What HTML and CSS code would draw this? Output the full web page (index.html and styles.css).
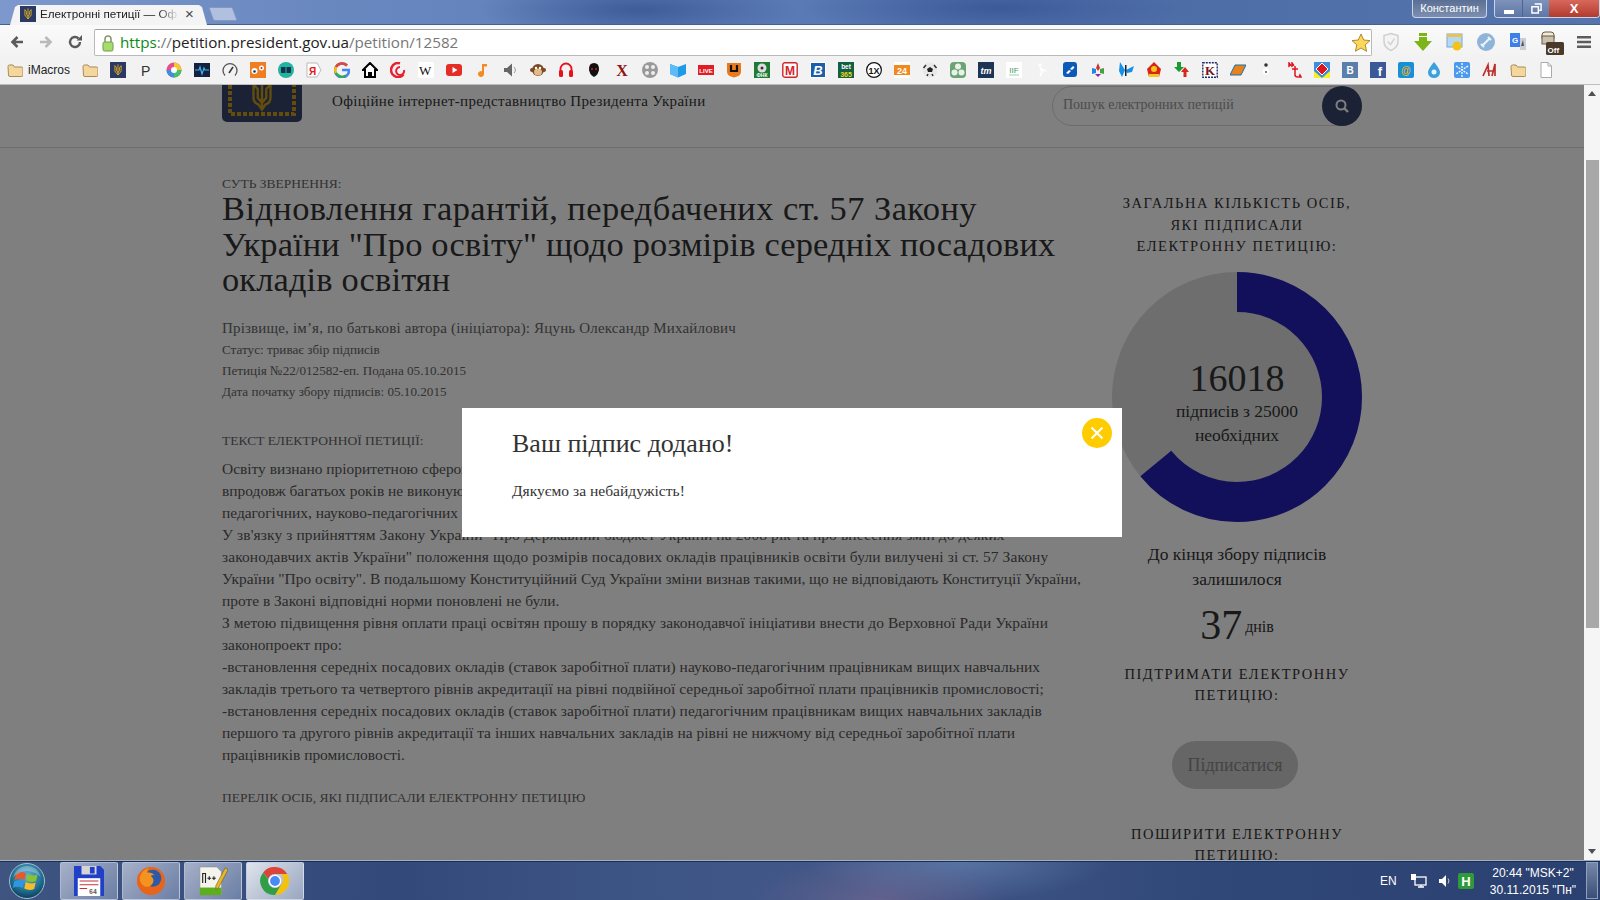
FILE: index.html
```html
<!DOCTYPE html>
<html lang="uk">
<head>
<meta charset="utf-8">
<title>Електронні петиції — Офіційне інтернет-представництво Президента України</title>
<link rel="stylesheet" href="styles.css">
</head>
<body>
<svg class="defs" width="0" height="0">
  <symbol id="folder" viewBox="0 0 16 16"><path d="M1 4.500q0-1.500 1.500-1.500h3.500l1.500 2h7q1.500 0 1.500 1.500v6.500q0 1.500-1.500 1.500h-11.500q-1.500 0-1.500-1.500z" fill="#f4d79c" stroke="#a98b55"/></symbol>
  <symbol id="trident" viewBox="0 0 16 20"><path d="M8 1v17M3 3v8q0 3 3 4l2 3 2-3q3-1 3-4V3l-2.500 3v5L8 14l-2.500-3V6z" fill="none" stroke="currentColor" stroke-width="1.400"/></symbol>
</svg>
<header class="win">
  <div class="tabstrip">
    <div class="tab">
      <svg class="fav" viewBox="0 0 16 16"><rect width="16" height="16" fill="#2c3a63"/><use href="#trident" x="3" y="1" width="10" height="14" color="#e0b020"/></svg>
      <span class="tab-title">Електронні петиції — Оф</span>
      <span class="tab-x">×</span>
    </div>
    <div class="newtab"></div>
    <div class="tab-spacer"></div>
    <div class="profile">Константин</div>
    <div class="winctl">
      <span class="wc wc-min"><i class="glyph-min"></i></span>
      <span class="wc wc-max"><svg viewBox="0 0 12 12"><path d="M4 1h7v7H9M1 4h7v7H1z" fill="none" stroke="#fff" stroke-width="1.600"/></svg></span>
      <span class="wc wc-close">X</span>
    </div>
  </div>
  <div class="toolbar">
    <div class="nav">
      <svg viewBox="0 0 16 16"><path d="M14 8H4M8.500 3L3.500 8l5 5" fill="none" stroke="#5a5a5a" stroke-width="2.600"/></svg>
      <svg viewBox="0 0 16 16"><path d="M2 8h10M7.500 3l5 5-5 5" fill="none" stroke="#b9b9b9" stroke-width="2.600"/></svg>
      <svg viewBox="0 0 16 16"><path d="M13 8a5 5 0 1 1-1.500-3.600" fill="none" stroke="#5a5a5a" stroke-width="2.400"/><path d="M9.500 6.500H15V1z" fill="#5a5a5a"/></svg>
    </div>
    <div class="omni">
      <svg class="lock" viewBox="0 0 12 18"><path d="M3 8V5a3 3 0 0 1 6 0v3" fill="none" stroke="#8a9a70" stroke-width="1.600"/><rect x="1" y="8" width="10" height="9" rx="1.500" fill="#a6dc6c" stroke="#6f9e45"/></svg>
      <span class="url"><b class="scheme">https</b><span class="dim">://</span><span class="host">petition.president.gov.ua</span><span class="dim">/petition/12582</span></span>
      <svg class="star" viewBox="0 0 20 20"><path d="M10 1l2.700 6 6.300.6-4.800 4.300 1.400 6.400L10 15l-5.600 3.300 1.400-6.400L1 7.600 7.300 7z" fill="#fbd75b" stroke="#b08a2a"/></svg>
    </div>
    <div class="ext">
      <svg viewBox="0 0 20 20"><path d="M10 1.500l7 2v6q0 6-7 9-7-3-7-9v-6z" fill="#f4f4f4" stroke="#cfcfcf" stroke-width="1.500"/><path d="M6.500 9.500l3 3 4-6" fill="none" stroke="#d5d5d5" stroke-width="1.500"/></svg>
      <svg viewBox="0 0 20 20"><path d="M6 1h8v3H6zM6 5h8v4h5l-9 10L1 9h5z" fill="#7cb518"/></svg>
      <svg viewBox="0 0 20 20"><rect x="2" y="2" width="15" height="13" fill="#b5d8f5" stroke="#7aa8d0"/><rect x="2" y="2" width="15" height="3" fill="#e8c24d"/><circle cx="12" cy="14" r="4.500" fill="#f3c316"/></svg>
      <svg viewBox="0 0 20 20"><circle cx="10" cy="10" r="9" fill="#8fb4d9"/><path d="M6 14l8-8M5 12l3 3M12 5l3 3" stroke="#eef4fa" stroke-width="2"/></svg>
      <svg viewBox="0 0 20 20"><path d="M2 1h10v14H2z" fill="#3f7fe8"/><text x="4" y="11" class="ext-g">G</text><path d="M12 6h6v12h-6z" fill="#c9ced6"/><path d="M15 8l1 6h-3z" fill="#555"/></svg>
      <svg class="ext-off" viewBox="0 0 24 24"><rect x="2" y="1" width="12" height="9" rx="3" fill="#f2ead8" stroke="#6b5a45"/><rect x="2" y="5" width="12" height="8" fill="#c9c0ae" stroke="#6b5a45"/><rect x="6" y="11" width="18" height="13" rx="1.500" fill="#4a3a2b"/><text x="7.500" y="21.500" class="ext-offt">Off</text></svg>
      <svg class="menu" viewBox="0 0 14 14"><path d="M0 1h14v2.500H0zM0 5.800h14v2.500H0zM0 10.500h14V13H0z" fill="#5d5d5d"/></svg>
    </div>
  </div>
  <nav class="bookmarks">
    <svg class="bfolder"><use href="#folder"/></svg>
    <span class="bm-label">iMacros</span>
    <svg class="bfolder2"><use href="#folder"/></svg>
    <div class="bm-row">
      <span class="bm"><svg viewBox="0 0 16 16"><rect width="16" height="16" fill="#2c3a63"/><use href="#trident" x="3" y="1" width="10" height="14" color="#e0b020"/></svg></span>
      <span class="bm"><svg viewBox="0 0 16 16"><text x="3" y="14" class="t-p">P</text></svg></span>
      <span class="bm"><svg viewBox="0 0 16 16"><circle cx="8" cy="8" r="7.500" fill="#ea4b8b"/><path d="M8 8V.500A7.500 7.500 0 0 1 15.500 8z" fill="#f6c62e"/><path d="M8 8h7.500A7.500 7.500 0 0 1 8 15.500z" fill="#46c06a"/><path d="M8 8v7.500A7.500 7.500 0 0 1 .5 8z" fill="#3d8ee0"/><circle cx="8" cy="8" r="3" fill="#fff"/></svg></span>
      <span class="bm"><svg viewBox="0 0 16 16"><rect y="1" width="16" height="14" fill="#16213f"/><path d="M1 8h4l1-3 2 7 2-6 1 2h4" fill="none" stroke="#37b5f0" stroke-width="1.200"/></svg></span>
      <span class="bm"><svg viewBox="0 0 16 16"><path d="M3 13.500a7 7 0 1 1 10 0" fill="none" stroke="#555" stroke-width="1.300"/><path d="M7 11l4-6" stroke="#333" stroke-width="1.500"/></svg></span>
      <span class="bm"><svg viewBox="0 0 16 16"><rect width="16" height="16" fill="#ef7d22"/><circle cx="4.500" cy="9" r="3" fill="#fff"/><circle cx="11.500" cy="6" r="2.500" fill="#fff"/><circle cx="4.500" cy="9.500" r="1.300" fill="#235"/><circle cx="11.500" cy="6" r="1" fill="#c22"/></svg></span>
      <span class="bm"><svg viewBox="0 0 16 16"><circle cx="8" cy="8" r="8" fill="#1fb5a2"/><rect x="3" y="5" width="10" height="6" fill="#16324a"/><path d="M8 5v6" stroke="#1fb5a2"/></svg></span>
      <span class="bm"><svg viewBox="0 0 16 16"><path d="M1 1h10l4 7-4 7H1z" fill="#fff" stroke="#bbb"/><text x="3" y="12.500" class="t-ya">Я</text></svg></span>
      <span class="bm"><svg viewBox="0 0 16 16"><path d="M13 3.500A7 7 0 1 0 15 8H8" fill="none" stroke="#4285f4" stroke-width="2.500"/><path d="M13 3.500A7 7 0 0 0 2 5" fill="none" stroke="#ea4335" stroke-width="2.500"/><path d="M2 5a7 7 0 0 0 0 6" fill="none" stroke="#fbbc05" stroke-width="2.500"/><path d="M2 11a7 7 0 0 0 10 2.500" fill="none" stroke="#34a853" stroke-width="2.500"/></svg></span>
      <span class="bm"><svg viewBox="0 0 16 16"><path d="M8 1L1 8h2v7h4v-4h2v4h4V8h2z" fill="#fff" stroke="#000" stroke-width="2"/></svg></span>
      <span class="bm"><svg viewBox="0 0 16 16"><path d="M13.500 12.500A7 7 0 1 1 10 1.300" fill="none" stroke="#e8202f" stroke-width="2.600"/><path d="M14 8a4 4 0 1 1-4-3" fill="none" stroke="#e8202f" stroke-width="2"/></svg></span>
      <span class="bm"><svg viewBox="0 0 16 16"><rect width="16" height="16" rx="2" fill="#fff"/><text x="1" y="13" class="t-w">W</text></svg></span>
      <span class="bm"><svg viewBox="0 0 16 16"><rect y="2" width="16" height="12" rx="3" fill="#e52d27"/><path d="M6.500 5v6l5-3z" fill="#fff"/></svg></span>
      <span class="bm"><svg viewBox="0 0 16 16"><path d="M8 2h5v2.500h-3V12a3 3 0 1 1-2-2.800z" fill="#f58a1f"/></svg></span>
      <span class="bm"><svg viewBox="0 0 16 16"><path d="M2 6h3l5-4.500v13L5 10H2z" fill="#666"/><path d="M12 5a4 4 0 0 1 0 6" fill="none" stroke="#999"/></svg></span>
      <span class="bm"><svg viewBox="0 0 16 16"><circle cx="8" cy="8" r="6" fill="#7b4a24"/><circle cx="2" cy="8" r="2" fill="#7b4a24"/><circle cx="14" cy="8" r="2" fill="#7b4a24"/><ellipse cx="8" cy="10" rx="4" ry="3.500" fill="#e6b98a"/><circle cx="6" cy="6" r="1.200" fill="#fff"/><circle cx="10" cy="6" r="1.200" fill="#fff"/></svg></span>
      <span class="bm"><svg viewBox="0 0 16 16"><path d="M2.500 10V7a5.500 5.500 0 0 1 11 0v3" fill="none" stroke="#e8101a" stroke-width="1.800"/><rect x="1" y="8" width="4" height="7" rx="1.500" fill="#e8101a"/><rect x="11" y="8" width="4" height="7" rx="1.500" fill="#e8101a"/></svg></span>
      <span class="bm"><svg viewBox="0 0 16 16"><path d="M8 1q5 0 5 6 0 5-5 8-5-3-5-8 0-6 5-6z" fill="#111"/><circle cx="6" cy="7" r="1" fill="#c22"/><circle cx="10" cy="7" r="1" fill="#c22"/></svg></span>
      <span class="bm"><svg viewBox="0 0 16 16"><text x="8" y="13.500" class="t-x">X</text></svg></span>
      <span class="bm"><svg viewBox="0 0 16 16"><circle cx="8" cy="8" r="8" fill="#999"/><circle cx="5" cy="5" r="2" fill="#eee"/><circle cx="11" cy="5" r="2" fill="#eee"/><circle cx="5" cy="11" r="2" fill="#eee"/><circle cx="11" cy="11" r="2" fill="#eee"/></svg></span>
      <span class="bm"><svg viewBox="0 0 16 16"><path d="M0 2l8 3 8-3v10l-8 3.500L0 12z" fill="#1f9ae8"/><path d="M8 5v10.500L0 12V2z" fill="#5bbcf5"/></svg></span>
      <span class="bm"><svg viewBox="0 0 16 16"><rect y="3" width="16" height="10" fill="#e31b23"/><text x="8" y="11" class="t-live">LIVE</text></svg></span>
      <span class="bm"><svg viewBox="0 0 16 16"><path d="M1 1h14v9q0 4-7 5.500Q1 14 1 10z" fill="#e87a1d"/><path d="M5 3v6h6V3" fill="none" stroke="#111" stroke-width="2.200"/></svg></span>
      <span class="bm"><svg viewBox="0 0 16 16"><rect width="16" height="16" fill="#1f7a33"/><circle cx="8" cy="6" r="4.500" fill="#ddd"/><circle cx="8" cy="6" r="1.500" fill="#333"/><text x="8" y="15" class="t-fnk">ФНК</text></svg></span>
      <span class="bm"><svg viewBox="0 0 16 16"><rect x=".8" y=".8" width="14.400" height="14.400" rx="2" fill="#fff" stroke="#d2232a" stroke-width="1.400"/><text x="8" y="12.500" class="t-m">M</text></svg></span>
      <span class="bm"><svg viewBox="0 0 16 16"><rect width="16" height="16" fill="#fff"/><rect x="1" y="1" width="14" height="14" fill="#1a5fa8"/><text x="8" y="13" class="t-b">B</text></svg></span>
      <span class="bm"><svg viewBox="0 0 16 16"><rect width="16" height="16" fill="#11603f"/><text x="8" y="7" class="t-bet">bet</text><text x="8" y="14.500" class="t-365">365</text></svg></span>
      <span class="bm"><svg viewBox="0 0 16 16"><circle cx="8" cy="8" r="7.400" fill="#fff" stroke="#111" stroke-width="1.200"/><text x="8" y="11.500" class="t-1x">1X</text></svg></span>
      <span class="bm"><svg viewBox="0 0 16 16"><rect width="16" height="16" fill="#fff"/><rect y="3" width="16" height="10" fill="#f08a1d"/><text x="8" y="11.500" class="t-24">24</text></svg></span>
      <span class="bm"><svg viewBox="0 0 16 16"><circle cx="8" cy="8" r="7.500" fill="#e8e8e8"/><path d="M8 5l3 2-1 3H6L5 7z" fill="#222"/><path d="M1.500 6L4 3M14.500 6L12 3M5 14l1-2M11 14l-1-2" stroke="#333" stroke-width="1.500"/></svg></span>
      <span class="bm"><svg viewBox="0 0 16 16"><rect width="16" height="16" rx="4" fill="#6ba474"/><circle cx="8" cy="4.500" r="3" fill="#e9f2e8"/><circle cx="4.500" cy="10.500" r="3" fill="#e9f2e8"/><circle cx="11.500" cy="10.500" r="3" fill="#e9f2e8"/></svg></span>
      <span class="bm"><svg viewBox="0 0 16 16"><rect width="16" height="16" fill="#1c3557"/><text x="8" y="11.500" class="t-tm">tm</text></svg></span>
      <span class="bm"><svg viewBox="0 0 16 16"><rect width="16" height="16" fill="#fff"/><text x="8" y="10.500" class="t-iif">IIF</text><path d="M3 13h10" stroke="#9bcfa6"/></svg></span>
      <span class="bm"><svg viewBox="0 0 16 16"><circle cx="6" cy="3" r="1.700" fill="#fff"/><path d="M6 5l2 5-2 4M7 7l5 2M14 14h.5" fill="none" stroke="#fff" stroke-width="1.700"/></svg></span>
      <span class="bm"><svg viewBox="0 0 16 16"><rect x="1" width="14" height="15" rx="3" fill="#0c59b8"/><path d="M4 11l3-3 2 1-3 3zM8 7l3-3 1.500 1.500L10 8z" fill="#fff"/></svg></span>
      <span class="bm"><svg viewBox="0 0 16 16"><path d="M8 1l2 5-2 3-2-3z" fill="#d32f2f"/><path d="M2 6l4 1v4l-4 1z" fill="#1e88e5"/><path d="M14 6l-4 1v4l4 1z" fill="#43a047"/><path d="M5 12h6l-3 3z" fill="#8e24aa"/></svg></span>
      <span class="bm"><svg viewBox="0 0 16 16"><path d="M7 8L2 0l-1 9 3 6zM8 8l8-4-2 6-5 1z" fill="#1590e8"/><path d="M7 3h1.500v11H7z" fill="#123"/></svg></span>
      <span class="bm"><svg viewBox="0 0 16 16"><path d="M8 0l7 7-2 8H3L1 7z" fill="#d92518"/><rect x="3" y="12" width="10" height="3" fill="#f6c619"/><circle cx="8" cy="7" r="3" fill="#f6c619"/></svg></span>
      <span class="bm"><svg viewBox="0 0 16 16"><path d="M3 0h4v5h3L5 10 0 5h3z" fill="#1c9a30"/><path d="M11 5l4 5h-2.500v5h-3v-5H7z" fill="#d8261c"/></svg></span>
      <span class="bm"><svg viewBox="0 0 16 16"><rect x=".8" y=".8" width="14.400" height="14.400" fill="#fff" stroke="#1c2d6a" stroke-width="1.400" stroke-dasharray="2 1"/><text x="8" y="13" class="t-k">K</text></svg></span>
      <span class="bm"><svg viewBox="0 0 16 16"><path d="M5 3h11l-5 10H0z" fill="#e8831c" stroke="#1273b4"/></svg></span>
      <span class="bm"><svg viewBox="0 0 16 16"><circle cx="8" cy="3" r="1.800" fill="#333"/><rect x="5" y="6" width="6" height="7" rx="3" fill="#fff"/><circle cx="8" cy="10" r="1" fill="#555"/></svg></span>
      <span class="bm"><svg viewBox="0 0 16 16"><path d="M3 1l1.500 2L3 4zM6 1l1.500 2L6 4zM9 4v9q0 2 3 2M6 7h6M14 13l1 2h-2z" fill="none" stroke="#e0141e" stroke-width="1.500"/></svg></span>
      <span class="bm"><svg viewBox="0 0 16 16"><rect width="16" height="16" fill="#f8ee22"/><path d="M0 0h16v9L8 16 0 9z" fill="#3a8ee0"/><path d="M8 1l6 6-6 6-6-6z" fill="#e0141e" stroke="#fff"/></svg></span>
      <span class="bm"><svg viewBox="0 0 16 16"><rect width="16" height="16" fill="#5b7faa"/><text x="8" y="12" class="t-vk">B</text></svg></span>
      <span class="bm"><svg viewBox="0 0 16 16"><rect width="16" height="16" fill="#3b5998"/><text x="10" y="14" class="t-f">f</text></svg></span>
      <span class="bm"><svg viewBox="0 0 16 16"><rect width="16" height="16" rx="2" fill="#1790d8"/><text x="8" y="12" class="t-at">@</text></svg></span>
      <span class="bm"><svg viewBox="0 0 16 16"><path d="M8 0q6 7 6 10.500a6 5.500 0 0 1-12 0Q2 7 8 0z" fill="#3aa0de"/><circle cx="8" cy="10" r="2.500" fill="#e8f5fc"/></svg></span>
      <span class="bm"><svg viewBox="0 0 16 16"><rect width="16" height="16" rx="2" fill="#4a9bef"/><path d="M8 1v14M2 4l12 8M14 4L2 12" stroke="#fff" stroke-width="1.300" stroke-dasharray="2 1"/></svg></span>
      <span class="bm"><svg viewBox="0 0 16 16"><rect width="16" height="16" fill="#f4f0ee"/><path d="M1 14L6 3l1 11M5 9h6M10 14l3-12v12" fill="none" stroke="#b92e30" stroke-width="1.700"/></svg></span>
      <span class="bm"><svg viewBox="0 0 16 16"><use href="#folder"/></svg></span>
      <span class="bm"><svg viewBox="0 0 16 16"><path d="M3 .5h7l3.500 3.500v11.500H3z" fill="#fff" stroke="#aaa"/><path d="M10 .5V4h3.500" fill="none" stroke="#aaa"/></svg></span>
    </div>
  </nav>
</header>

<div class="viewport">
  <div class="page">
    <div class="site-head">
      <div class="container head-row">
        <div class="logo">
          <svg viewBox="0 0 80 37"><rect y="-8" width="80" height="45" rx="5" fill="#36446a"/><path d="M8 0v29h64V0" fill="none" stroke="#c89a18" stroke-width="4" stroke-dasharray="4 2"/><use href="#trident" x="25" y="-6" width="30" height="34" color="#c89a18"/></svg>
        </div>
        <p class="tagline">Офіційне інтернет-представництво Президента України</p>
        <form class="search">
          <span class="search-text">Пошук електронних петицій</span>
          <span class="search-btn"><svg viewBox="0 0 16 16"><circle cx="7" cy="7" r="4.500" fill="none" stroke="#fff" stroke-width="2"/><path d="M10.500 10.500L14 14" stroke="#fff" stroke-width="2.400"/></svg></span>
        </form>
      </div>
    </div>

    <div class="container content">
      <main class="article">
        <div class="cap cap-top">СУТЬ ЗВЕРНЕННЯ:</div>
        <h1 class="title">
          <span class="title-first">Відновлення гарантій, передбачених ст. 57 Закону</span>
          <span>України "Про освіту" щодо розмірів середніх посадових</span>
          <span>окладів освітян</span>
        </h1>
        <ul class="meta">
          <li class="meta-author">Прізвище, ім’я, по батькові автора (ініціатора): Яцунь Олександр Михайлович</li>
          <li>Статус: триває збір підписів</li>
          <li>Петиція №22/012582-еп. Подана 05.10.2015</li>
          <li>Дата початку збору підписів: 05.10.2015</li>
        </ul>
        <div class="cap cap-text">ТЕКСТ ЕЛЕКТРОННОЇ ПЕТИЦІЇ:</div>
        <div class="body">
          <span>Освіту визнано пріоритетною сферою розвитку держави, однак положення законодавства</span>
          <span>впродовж багатьох років не виконуються в частині оплати праці працівників освіти,</span>
          <span>педагогічних, науково-педагогічних працівників вищих навчальних закладів.</span>
          <span class="ls-a">У зв'язку з прийняттям Закону України "Про Державний бюджет України на 2008 рік та про внесення змін до деяких</span>
          <span class="ls-a">законодавчих актів України" положення щодо розмірів посадових окладів працівників освіти були вилучені зі ст. 57 Закону</span>
          <span>України "Про освіту". В подальшому Конституційний Суд України зміни визнав такими, що не відповідають Конституції України,</span>
          <span>проте в Законі відповідні норми поновлені не були.</span>
          <span class="ls-b">З метою підвищення рівня оплати праці освітян прошу в порядку законодавчої ініціативи внести до Верховної Ради України</span>
          <span>законопроект про:</span>
          <span class="ls-b">-встановлення середніх посадових окладів (ставок заробітної плати) науково-педагогічним працівникам вищих навчальних</span>
          <span class="ls-c">закладів третього та четвертого рівнів акредитації на рівні подвійної середньої заробітної плати працівників промисловості;</span>
          <span class="ls-b">-встановлення середніх посадових окладів (ставок заробітної плати) педагогічним працівникам вищих навчальних закладів</span>
          <span class="ls-c">першого та другого рівнів акредитації та інших навчальних закладів на рівні не нижчому від середньої заробітної плати</span>
          <span>працівників промисловості.</span>
        </div>
        <div class="cap cap-list">ПЕРЕЛІК ОСІБ, ЯКІ ПІДПИСАЛИ ЕЛЕКТРОННУ ПЕТИЦІЮ</div>
      </main>

      <aside class="side">
        <h3 class="side-h">ЗАГАЛЬНА КІЛЬКІСТЬ ОСІБ,<br>ЯКІ ПІДПИСАЛИ<br>ЕЛЕКТРОННУ ПЕТИЦІЮ:</h3>
        <div class="donut">
          <svg viewBox="0 0 250 250"><circle cx="125" cy="125" r="125" fill="#dcdcdc"/><circle cx="125" cy="125" r="105" fill="none" stroke="#2420b4" stroke-width="40" pathLength="100" stroke-dasharray="64.070 100" transform="rotate(-90 125 125)"/></svg>
          <div class="donut-label">
            <div class="count">16018</div>
            <div class="of">підписів з 25000<br>необхідних</div>
          </div>
        </div>
        <p class="left">До кінця збору підписів<br>залишилося</p>
        <div class="days"><span class="days-n">37</span> <span class="days-t">днів</span></div>
        <h3 class="side-h side-support">ПІДТРИМАТИ ЕЛЕКТРОННУ<br>ПЕТИЦІЮ:</h3>
        <div class="sign">Підписатися</div>
        <h3 class="side-h side-share">ПОШИРИТИ ЕЛЕКТРОННУ<br>ПЕТИЦІЮ:</h3>
      </aside>
    </div>

    <div class="overlay"></div>
    <div class="modal">
      <h2 class="modal-h">Ваш підпис додано!</h2>
      <p class="modal-p">Дякуємо за небайдужість!</p>
      <span class="modal-x"><svg viewBox="0 0 30 30"><path d="M9.500 9.500l11 11M20.500 9.500l-11 11" stroke="#fff" stroke-width="2"/></svg></span>
    </div>
  </div>
  <div class="scrollbar">
    <span class="sb-up"></span>
    <span class="sb-thumb"></span>
    <span class="sb-down"></span>
  </div>
</div>

<footer class="taskbar">
  <div class="orb">
    <svg viewBox="0 0 36 36">
      <defs><radialGradient id="orbg" cx="50%" cy="35%" r="65%"><stop offset="0" stop-color="#5fb4d8"/><stop offset=".7" stop-color="#1d6a8c"/><stop offset="1" stop-color="#0e3c58"/></radialGradient></defs>
      <circle cx="18" cy="18" r="17.500" fill="url(#orbg)" stroke="#9cc2d4"/>
      <path d="M7 11q5-3 10-.500l-1.500 6.500q-5-2.500-10 0z" fill="#e8582a"/>
      <path d="M18.500 11q5 2.500 10 .500l-1.500 6.500q-5 2-10-.500z" fill="#86c232"/>
      <path d="M5.200 18.500q5-2.500 10 0l-1.500 6.500q-5-2.500-10 0z" fill="#2f96e2"/>
      <path d="M16.700 19q5 2.500 10 .500l-1.500 6.500q-5 2-10-.500z" fill="#f6bc2c"/>
      <path d="M4 14q14-12 28 0-4-11-14-11T4 14z" fill="#fff" opacity=".28"/>
    </svg>
  </div>
  <div class="task">
    <svg viewBox="0 0 32 32"><path d="M0 0h28l4 4v28H0z" fill="#2040c8"/><rect x="8" y="0" width="16" height="9" fill="#d5d5d5"/><rect x="17" y="1" width="5" height="7" fill="#2040c8"/><rect x="4" y="13" width="24" height="19" fill="#fff"/><path d="M6 16h20M6 20h20M6 24h8" stroke="#c8303c" stroke-width="1.300"/><text x="16" y="30" class="t-64">64</text></svg>
  </div>
  <div class="task">
    <svg viewBox="0 0 32 32"><circle cx="16" cy="16" r="15" fill="#e8641a"/><circle cx="18" cy="13" r="9" fill="#2a5aa8"/><path d="M4 12q2-8 10-10-3 3-2 5 5-1 8 3-3-1-4 1 4 3 2 7-3 5-8 4Q4 20 4 12z" fill="#f39420"/></svg>
  </div>
  <div class="task">
    <svg viewBox="0 0 32 32"><path d="M2 1h18l5 5v25H2z" fill="#f4f4ec" stroke="#888" stroke-width=".6"/><rect x="2" y="23" width="23" height="8" fill="#5cae1c"/><path d="M5 18V8h3v10M10 13h4M12 11v4M15 13h4M17 11v4" fill="none" stroke="#222" stroke-width="1.200"/><path d="M29 2l3 2-10 19-3 2 0-4z" fill="#e8b92a" stroke="#6a5218" stroke-width=".6"/></svg>
  </div>
  <div class="task task-on">
    <svg viewBox="0 0 32 32"><path d="M16 1a15 15 0 0 1 13 7.500H16a7.500 7.500 0 0 0-7.200 5.400L3.400 6.800A15 15 0 0 1 16 1z" fill="#db4437"/><path d="M29 8.500A15 15 0 0 1 16 31l6.500-11.200a7.500 7.500 0 0 0 0-11.300z" fill="#f4c20d"/><path d="M3.400 6.800A15 15 0 0 0 16 31l6.500-11.200A7.500 7.500 0 0 1 8.800 14z" fill="#2f9e44"/><circle cx="16" cy="16" r="6" fill="#4a8af4" stroke="#fff" stroke-width="1.500"/></svg>
  </div>
  <div class="task-fill"></div>
  <div class="tray">
    <span class="lang">EN</span>
    <svg class="tray-net" viewBox="0 0 16 16"><rect x="4" y="4" width="11" height="8" fill="none" stroke="#fff" stroke-width="1.300"/><path d="M7 14h6M10 12v2" stroke="#fff" stroke-width="1.300"/><rect x="0" y="1" width="5" height="6" fill="#fff"/></svg>
    <svg class="tray-vol" viewBox="0 0 16 16"><path d="M2 6h3l4-4v12l-4-4H2z" fill="#fff"/><path d="M11 5.500q2 2.500 0 5" fill="none" stroke="#ccc"/></svg>
    <svg class="tray-h" viewBox="0 0 16 16"><rect width="16" height="16" rx="2" fill="#2f9a3a"/><text x="8" y="13" class="t-h">H</text></svg>
    <div class="clock"><span>20:44 "MSK+2"</span><span>30.11.2015 "Пн"</span></div>
    <span class="show-desk"></span>
  </div>
</footer>
</body>
</html>
```
FILE: styles.css
```css
* { box-sizing: border-box; }
html, body { margin: 0; height: 100%; }
body {
  display: flex;
  flex-direction: column;
  height: 900px;
  width: 1600px;
  overflow: hidden;
  font-family: "Liberation Serif", serif;
  color: #333;
  background: #fff;
}
.defs { position: absolute; }
svg { display: block; }

/* window chrome */
.win { height: 85px; flex: none; display: flex; flex-direction: column; font-family: "Liberation Sans", sans-serif; }
.tabstrip {
  height: 25px;
  display: flex;
  align-items: flex-end;
  padding-left: 10px;
  background:
    radial-gradient(ellipse 160px 30px at 640px 10px, #3e5c98 0, rgba(62,92,152,0) 100%),
    radial-gradient(ellipse 200px 30px at 1000px 8px, #3c5a98 0, rgba(60,90,152,0) 100%),
    linear-gradient(90deg, #7d98cc 0, #6a88c0 20%, #5a7ab6 50%, #4e6ea8 75%, #5574ad 100%);
  border-bottom: 1px solid #44608f;
}
.tab {
  width: 197px;
  height: 20px;
  display: flex;
  align-items: center;
  padding: 0 0 3px 10px;
  background: #f4f4f4;
  clip-path: polygon(0 100%, 5px 2px, 8px 0, 189px 0, 192px 2px, 197px 100%);
  font-size: 12px;
  color: #222;
  margin-bottom: -1px;
}
.fav { width: 16px; height: 16px; flex: none; margin-right: 4px; }
.tab-title { width: 139px; white-space: nowrap; overflow: hidden; -webkit-mask-image: linear-gradient(90deg, #000 85%, transparent); mask-image: linear-gradient(90deg, #000 85%, transparent); font-size: 11.700px; }
.tab-x { margin-left: 6px; font-size: 15px; color: #444; line-height: 1; }
.newtab { width: 30px; height: 14px; margin: 0 0 3px 1px; background: #b0c0de; border: 1px solid #8298c0; border-radius: 2px; transform: skewX(20deg) scaleX(.8); }
.tab-spacer { flex: 1; }
.profile {
  align-self: flex-start;
  width: 75px;
  height: 18px;
  margin-right: 7px;
  border: 1px solid #c8d4e8;
  border-top: 0;
  border-radius: 0 0 4px 4px;
  background: linear-gradient(#5a6f94, #7d8fb0);
  color: #fff;
  font-size: 11px;
  line-height: 17px;
  text-align: center;
}
.winctl { align-self: flex-start; display: flex; width: 106px; height: 18px; border: 1px solid #c8d4e8; border-top: 0; border-radius: 0 0 4px 4px; overflow: hidden; }
.wc { height: 17px; display: flex; align-items: center; justify-content: center; color: #fff; }
.wc svg { width: 11px; height: 11px; }
.wc-min { width: 27px; background: linear-gradient(#7d93bb, #5d76a5); }
.wc-max { width: 27px; background: linear-gradient(#7d93bb, #5d76a5); border-left: 1px solid #4d6490; }
.wc-close { flex: 1; background: linear-gradient(#d8685c, #b23a2e); font-size: 13px; font-weight: bold; }
.glyph-min { width: 10px; height: 4px; background: #fff; margin-top: 6px; }

.toolbar { height: 33px; display: flex; align-items: center; background: linear-gradient(#fafafa, #f2f2f2); }
.nav { width: 94px; display: flex; padding-left: 9px; gap: 13px; flex: none; }
.nav svg { width: 16px; height: 16px; }
.omni {
  width: 1278px;
  height: 27px;
  flex: none;
  margin-top: 2px;
  display: flex;
  align-items: center;
  background: #fff;
  border: 1px solid #b9b9b9;
  border-top-color: #a0a0a0;
  border-radius: 2px;
  padding: 0 0 0 7px;
}
.lock { width: 12px; height: 18px; flex: none; margin-right: 6px; }
.url { flex: 1; font-size: 15.200px; line-height: 23px; padding-bottom: 1px; white-space: nowrap; font-family: "Open Sans", "Liberation Sans", sans-serif; }
.scheme { font-weight: normal; color: #0b8a12; }
.dim { color: #777; }
.host { color: #222; }
.star { width: 20px; height: 20px; flex: none; }
.ext { flex: 1; display: flex; align-items: center; padding-left: 9px; gap: 11.800px; }
.ext svg { width: 20px; height: 20px; flex: none; }
.ext svg.ext-off { width: 24px; height: 24px; margin-top: 3px; }
.ext svg.menu { width: 14px; height: 14px; margin-left: 1px; }
.ext-g { font: bold 8px "Liberation Sans", sans-serif; fill: #fff; }
.ext-offt { font: bold 8px "Liberation Sans", sans-serif; fill: #fff; }

.bookmarks { height: 27px; display: flex; align-items: center; padding-bottom: 2px; background: #f2f2f2; border-bottom: 1px solid #bdbdbd; position: relative; }
.bfolder { width: 16px; height: 16px; margin-left: 7px; flex: none; }
.bm-label { font-size: 12px; margin-left: 5px; width: 42px; color: #222; flex: none; white-space: nowrap; }
.bfolder2 { width: 16px; height: 16px; margin-left: 12px; flex: none; }
.bm-row { display: flex; margin-left: 6px; }
.bm { width: 28px; display: flex; justify-content: center; flex: none; }
.bm svg { width: 16px; height: 16px; }
.bm text { font-family: "Liberation Sans", sans-serif; text-anchor: middle; }
.bm .t-p { font-size: 14px; fill: #333; text-anchor: start; }
.bm .t-ya { font-size: 10px; fill: #e01818; font-weight: bold; text-anchor: start; }
.bm .t-w { font: 13px "Liberation Serif", serif; fill: #111; text-anchor: start; }
.bm .t-x { font: bold 16px "Liberation Serif", serif; fill: #8f1414; }
.bm .t-live { font-size: 6px; font-weight: bold; fill: #fff; }
.bm .t-fnk { font-size: 5px; font-weight: bold; fill: #fff; }
.bm .t-m { font-size: 12px; font-weight: bold; fill: #d2232a; }
.bm .t-b { font-size: 13px; font-weight: bold; font-style: italic; fill: #fff; }
.bm .t-bet { font-size: 6.500px; font-weight: bold; fill: #fff; }
.bm .t-365 { font-size: 7px; font-weight: bold; fill: #f6d21e; }
.bm .t-1x { font-size: 9px; font-weight: bold; fill: #111; }
.bm .t-24 { font-size: 9px; font-weight: bold; fill: #fff; }
.bm .t-tm { font-size: 9px; font-weight: bold; font-style: italic; fill: #fff; }
.bm .t-iif { font-size: 8px; fill: #3a9a58; }
.bm .t-k { font: bold 13px "Liberation Serif", serif; fill: #7a1420; }
.bm .t-vk { font-size: 10px; font-weight: bold; fill: #fff; }
.bm .t-f { font-size: 13px; font-weight: bold; fill: #fff; }
.bm .t-at { font-size: 10px; font-weight: bold; fill: #f2b21c; }

/* page */
.viewport { flex: 1; min-height: 0; display: flex; }
.page { position: relative; width: 1584px; height: 775px; overflow: hidden; background: #fff; }
.container { width: 1140px; margin: 0 auto; }
.site-head { height: 63px; border-bottom: 1px solid #ddd; }
.head-row { display: flex; height: 100%; }
.logo { width: 80px; height: 37px; flex: none; }
.logo svg { width: 80px; height: 37px; }
.tagline { margin: 6px 0 0 30px; font-size: 15px; line-height: 20px; flex: 1; color: #333; letter-spacing: .31px; white-space: nowrap; }
.search { width: 310px; height: 40px; margin-top: 1px; position: relative; display: flex; align-items: center; padding-bottom: 3px; border: 1px solid #d8d8d8; border-radius: 20px; }
.search-text { margin-left: 10px; font-size: 14px; color: #999; white-space: nowrap; }
.search-btn { position: absolute; right: -1px; top: -1px; width: 40px; height: 40px; border-radius: 50%; background: #36446a; display: flex; align-items: center; justify-content: center; }
.search-btn svg { width: 16px; height: 16px; }

.content { display: flex; padding-top: 29px; }
.article { width: 890px; flex: none; }
.cap { font-size: 13.500px; line-height: 16px; color: #666; white-space: nowrap; }
.cap-top { margin-top: -1px; }
.title { margin: -1px 0 0; font-size: 34.400px; font-weight: normal; line-height: 35.500px; color: #333; letter-spacing: .15px; }
.title-first { letter-spacing: .45px; }
.title span, .body span { display: block; white-space: nowrap; }
.meta { list-style: none; margin: 20px 0 0; padding: 0; font-size: 13.150px; line-height: 21px; color: #666; white-space: nowrap; }
.meta-author { font-size: 15px; letter-spacing: .17px; }
.cap-text { margin-top: 31px; }
.body { margin-top: 9px; font-size: 15.450px; line-height: 22px; color: #555; }
.body .ls-a { letter-spacing: .12px; }
.body .ls-b { letter-spacing: .05px; }
.body .ls-c { letter-spacing: .025px; }
.cap-list { margin-top: 24px; }

.side { width: 250px; margin-left: 0; flex: none; text-align: center; margin-top: 16px; }
.side-h { margin: 0; font-size: 14.500px; font-weight: normal; line-height: 21.500px; letter-spacing: 1.500px; color: #333; white-space: nowrap; }
.donut { position: relative; width: 250px; height: 250px; margin-top: 14px; }
.donut svg { width: 250px; height: 250px; }
.donut-label { position: absolute; left: 0; top: 85px; width: 100%; }
.count { font-size: 38px; line-height: 42px; color: #333; }
.of { font-size: 17.500px; line-height: 24.500px; color: #333; }
.left { margin: 20px 0 0; font-size: 17.500px; line-height: 25px; color: #333; }
.days { margin-top: 10px; height: 46px; display: flex; justify-content: center; align-items: center; gap: 3px; color: #333; }
.days-n { font-size: 42px; line-height: 46px; }
.days-t { font-size: 16px; padding-top: 5px; }
.side-support { margin-top: 16px; }
.sign { width: 126px; height: 48px; margin: 34px auto 0; transform: translateX(-2px); background: #ccc; border-radius: 24px; color: #888; font-size: 17.800px; line-height: 48px; }
.side-share { margin-top: 35px; }

.overlay { position: absolute; inset: 0; background: rgba(0,0,0,.5); }
.modal { position: absolute; left: 462px; top: 323px; width: 660px; height: 129px; background: #fff; padding: 20px 50px; }
.modal-h { margin: 0; font-size: 26px; font-weight: normal; line-height: 32px; color: #333; white-space: nowrap; }
.modal-p { margin: 21px 0 0; font-size: 15.550px; line-height: 20px; color: #333; }
.modal-x { position: absolute; right: 10px; top: 10px; width: 30px; height: 30px; border-radius: 50%; background: #fc0; }
.modal-x svg { width: 30px; height: 30px; }

.scrollbar { width: 16px; flex: none; background: #f5f5f5; display: flex; flex-direction: column; align-items: center; }
.sb-up { width: 0; height: 0; margin-top: 6px; border: 4px solid transparent; border-top: 0; border-bottom: 5px solid #505050; flex: none; }
.sb-thumb { width: 13px; height: 468px; margin-top: 64px; background: #a8a8a8; flex: none; }
.sb-down { width: 0; height: 0; margin-top: auto; margin-bottom: 6px; border: 4px solid transparent; border-bottom: 0; border-top: 5px solid #505050; flex: none; }

/* taskbar */
.taskbar {
  height: 40px;
  flex: none;
  display: flex;
  align-items: center;
  font-family: "Liberation Sans", sans-serif;
  border-top: 1px solid #9fb0c8;
  box-shadow: inset 0 1px 0 #1c2f52;
  background:
    radial-gradient(ellipse 130px 45px at 880px 40px, rgba(150,115,150,.38) 0, rgba(150,115,150,0) 100%),
    radial-gradient(ellipse 150px 40px at 960px 0, rgba(125,160,205,.42) 0, rgba(125,160,205,0) 100%),
    linear-gradient(90deg, #3f5580 0, #33497a 25%, #3d5585 40%, #425788 55%, #304878 75%, #2a4070 100%);
}
.orb { width: 60px; display: flex; justify-content: center; flex: none; padding-right: 6px; }
.orb svg { width: 36px; height: 36px; }
.task { width: 58px; height: 38px; margin-right: 4px; flex: none; display: flex; align-items: center; justify-content: center; border: 1px solid rgba(210,220,235,.6); border-radius: 2px; background: linear-gradient(135deg, #a6b0c8, #6a7ea5); }
.task svg { width: 30px; height: 30px; }
.task-on { background: linear-gradient(135deg, #dfe3ec, #98a6c0); }
.t-64 { font: bold 7px "Liberation Mono", monospace; fill: #555; }
.task-fill { flex: 1; }
.tray { display: flex; align-items: center; color: #fff; }
.lang { font-size: 12px; width: 31px; }
.tray-net { width: 16px; height: 16px; margin-right: 10px; }
.tray-vol { width: 16px; height: 16px; margin-right: 5px; }
.tray-h { width: 16px; height: 16px; margin-right: 14px; }
.t-h { font: bold 13px "Liberation Sans", sans-serif; fill: #fff; text-anchor: middle; }
.clock { width: 90px; display: flex; flex-direction: column; align-items: center; padding-top: 2px; font-size: 12px; line-height: 17px; white-space: nowrap; }
.show-desk { width: 12px; height: 37px; margin: 0 2px 0 8px; border: 1px solid #90a0bc; background: linear-gradient(#7688a8, #3a4f78); }
```
